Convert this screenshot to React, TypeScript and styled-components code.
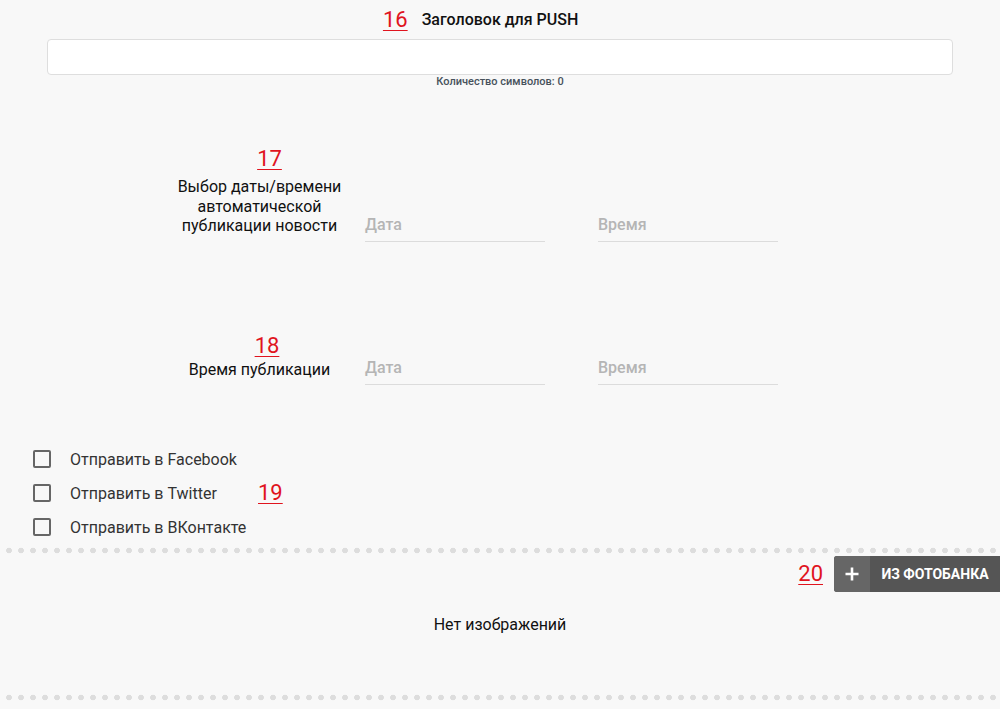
import React from "react";
import styled, { createGlobalStyle } from "styled-components";

const Global = createGlobalStyle`
  html, body { margin: 0; padding: 0; background: #f8f8f8; }
  body { font-family: Roboto, "Noto Sans", "Liberation Sans", sans-serif; color: #222; }
  * { box-sizing: border-box; }
`;

const Page = styled.div`
  width: 1000px;
  min-height: 709px;
  background: #f8f8f8;
  overflow: hidden;
`;

const Mark = styled.span`
  font-size: 22px;
  line-height: 24px;
  color: #e0141e;
  text-decoration: underline;
  text-decoration-thickness: 1px;
  text-underline-offset: 3px;
  font-weight: 400;
`;

const FloatMark = styled(Mark)<{ $gap: number }>`
  position: absolute;
  right: calc(100% + ${(p) => p.$gap}px);
  top: 50%;
  transform: translateY(-50%);
`;

const Header = styled.div`
  height: 39px;
  display: flex;
  justify-content: center;
  align-items: center;
`;

const HeaderTitle = styled.div`
  position: relative;
  font-size: 16px;
  font-weight: 500;
  color: #111;
`;

const InputWrap = styled.div`
  padding: 0 47px;
`;

const TextInput = styled.div`
  height: 36px;
  background: #fff;
  border: 1px solid #dedede;
  border-radius: 4px;
`;

const Counter = styled.div`
  text-align: center;
  font-size: 11px;
  font-weight: 500;
  color: #47525c;
  line-height: 14px;
`;

const Section = styled.div<{ $top: number }>`
  margin-top: ${(p) => p.$top}px;
  display: flex;
  align-items: flex-end;
  padding-left: 164px;
`;

const LabelCol = styled.div`
  width: 191px;
  margin-right: 10px;
  text-align: center;
  display: flex;
  flex-direction: column;
  align-items: center;
  padding-bottom: 6px;
`;

const ColMark = styled(Mark)<{ $gap: number; $shift: number }>`
  margin-bottom: ${(p) => p.$gap}px;
  margin-left: ${(p) => p.$shift * 2}px;
`;

const LabelText = styled.div`
  font-size: 16px;
  line-height: 19.5px;
  color: #111;
`;

const Fields = styled.div`
  display: flex;
  gap: 53px;
`;

const Field = styled.div`
  width: 180px;
  font-size: 16px;
  line-height: 20px;
  color: #b5b5b5;
  font-weight: 500;
  padding-bottom: 6px;
  border-bottom: 1px solid #dcdcdc;
`;

const Checks = styled.div`
  position: relative;
  margin-top: 57px;
  padding-left: 33px;
  display: flex;
  flex-direction: column;
`;

const CheckRow = styled.label`
  position: relative;
  display: flex;
  align-items: center;
  height: 34px;
  font-size: 16px;
  color: #333;
`;

const Box = styled.span`
  width: 18px;
  height: 18px;
  border: 2px solid #666;
  border-radius: 2px;
  margin-right: 19px;
  flex: none;
`;

const InlineMark = styled(Mark)`
  position: absolute;
  left: 225px;
  top: 50%;
  transform: translateY(-50%);
`;

const Dots = styled.div<{ $top: number }>`
  margin-top: ${(p) => p.$top}px;
  height: 11px;
  background-image: radial-gradient(circle, #dddddd 2.6px, transparent 3.1px);
  background-size: 12px 11px;
  background-position: 3px 0;
  background-repeat: repeat-x;
`;

const ButtonRow = styled.div`
  display: flex;
  justify-content: flex-end;
`;

const PhotoButton = styled.button`
  position: relative;
  display: flex;
  height: 36px;
  padding: 0;
  border: none;
  border-radius: 3px 0 0 3px;
  background: #555;
  color: #fff;
  font-family: inherit;
  cursor: pointer;
`;

const PlusPart = styled.span`
  width: 36px;
  display: flex;
  align-items: center;
  justify-content: center;
  background: #666;
  border-radius: 3px 0 0 3px;
`;

const ButtonText = styled.span`
  width: 130px;
  display: flex;
  align-items: center;
  justify-content: center;
  font-size: 14px;
  font-weight: 700;
`;

const Empty = styled.div`
  margin-top: 23px;
  text-align: center;
  font-size: 16px;
  line-height: 20px;
  color: #111;
`;

export default function App() {
  return (
    <Page>
      <Global />
      <Header>
        <HeaderTitle>
          <FloatMark $gap={14}>16</FloatMark>
          Заголовок для PUSH
        </HeaderTitle>
      </Header>
      <InputWrap>
        <TextInput />
      </InputWrap>
      <Counter>Количество символов: 0</Counter>

      <Section $top={58}>
        <LabelCol>
          <ColMark $gap={6} $shift={10}>17</ColMark>
          <LabelText>
            Выбор даты/времени
            <br />
            автоматической
            <br />
            публикации новости
          </LabelText>
        </LabelCol>
        <Fields>
          <Field>Дата</Field>
          <Field>Время</Field>
        </Fields>
      </Section>

      <Section $top={92}>
        <LabelCol>
          <ColMark $gap={2} $shift={7.5}>18</ColMark>
          <LabelText>Время публикации</LabelText>
        </LabelCol>
        <Fields>
          <Field>Дата</Field>
          <Field>Время</Field>
        </Fields>
      </Section>

      <Checks>
        <CheckRow>
          <Box />
          Отправить в Facebook
        </CheckRow>
        <CheckRow>
          <Box />
          Отправить в Twitter
          <InlineMark>19</InlineMark>
        </CheckRow>
        <CheckRow>
          <Box />
          Отправить в ВКонтакте
        </CheckRow>
      </Checks>

      <Dots $top={1} />
      <ButtonRow>
        <PhotoButton>
          <FloatMark $gap={11}>20</FloatMark>
          <PlusPart>
            <svg width="14" height="14" viewBox="0 0 14 14">
              <path d="M7 0.5v13M0.5 7h13" stroke="#fff" strokeWidth="2.6" />
            </svg>
          </PlusPart>
          <ButtonText>ИЗ ФОТОБАНКА</ButtonText>
        </PhotoButton>
      </ButtonRow>
      <Empty>Нет изображений</Empty>
      <Dots $top={57} />
    </Page>
  );
}
